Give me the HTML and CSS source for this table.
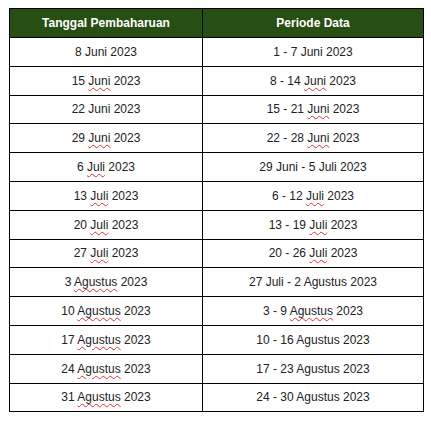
FILE: index.html
```html
<!DOCTYPE html>
<html>
<head>
    <title>Jadwal Pembaharuan Data</title>
    <link rel="stylesheet" href="styles.css">
</head>
<body>
    <table class="schedule">
        <colgroup>
            <col class="col-left">
            <col class="col-right">
        </colgroup>
        <thead>
            <tr>
                <th>Tanggal Pembaharuan</th>
                <th>Periode Data</th>
            </tr>
        </thead>
        <tbody>
            <tr><td>8 Juni 2023</td><td>1 - 7 Juni 2023</td></tr>
            <tr><td>15 <span class="typo">Juni</span> 2023</td><td>8 - 14 <span class="typo">Juni</span> 2023</td></tr>
            <tr><td>22 Juni 2023</td><td>15 - 21 <span class="typo">Juni</span> 2023</td></tr>
            <tr><td>29 <span class="typo">Juni</span> 2023</td><td>22 - 28 <span class="typo">Juni</span> 2023</td></tr>
            <tr><td>6 <span class="typo">Juli</span> 2023</td><td>29 Juni - 5 Juli 2023</td></tr>
            <tr><td>13 <span class="typo">Juli</span> 2023</td><td>6 - 12 <span class="typo">Juli</span> 2023</td></tr>
            <tr><td>20 <span class="typo">Juli</span> 2023</td><td>13 - 19 <span class="typo">Juli</span> 2023</td></tr>
            <tr><td>27 <span class="typo">Juli</span> 2023</td><td>20 - 26 <span class="typo">Juli</span> 2023</td></tr>
            <tr><td>3 <span class="typo">Agustus</span> 2023</td><td>27 Juli - 2 Agustus 2023</td></tr>
            <tr><td>10 <span class="typo">Agustus</span> 2023</td><td>3 - 9 <span class="typo">Agustus</span> 2023</td></tr>
            <tr><td>17 <span class="typo">Agustus</span> 2023</td><td>10 - 16 Agustus 2023</td></tr>
            <tr><td>24 <span class="typo">Agustus</span> 2023</td><td>17 - 23 Agustus 2023</td></tr>
            <tr><td>31 <span class="typo">Agustus</span> 2023</td><td>24 - 30 Agustus 2023</td></tr>
        </tbody>
    </table>
</body>
</html>
```

FILE: styles.css
```css
body {
    margin: 8px 0 0 9px;
    font-family: "Liberation Sans", Arial, sans-serif;
    font-size: 12px;
    color: #222;
    background-color: white;
}
.schedule {
    border-collapse: collapse;
    width: 414px;
    table-layout: fixed;
}
.col-left {
    width: 193px;
}
.col-right {
    width: 221px;
}
.schedule th,
.schedule td {
    border: 1px solid #000;
    text-align: center;
    padding: 0;
    line-height: 14px;
}
.schedule th {
    background-color: #274e13;
    color: white;
    font-weight: bold;
    height: 28px;
}
.schedule td {
    height: 27.8px;
}
.typo {
    text-decoration: underline wavy #e03030;
    text-decoration-thickness: 1px;
    text-underline-offset: 2px;
}
```
